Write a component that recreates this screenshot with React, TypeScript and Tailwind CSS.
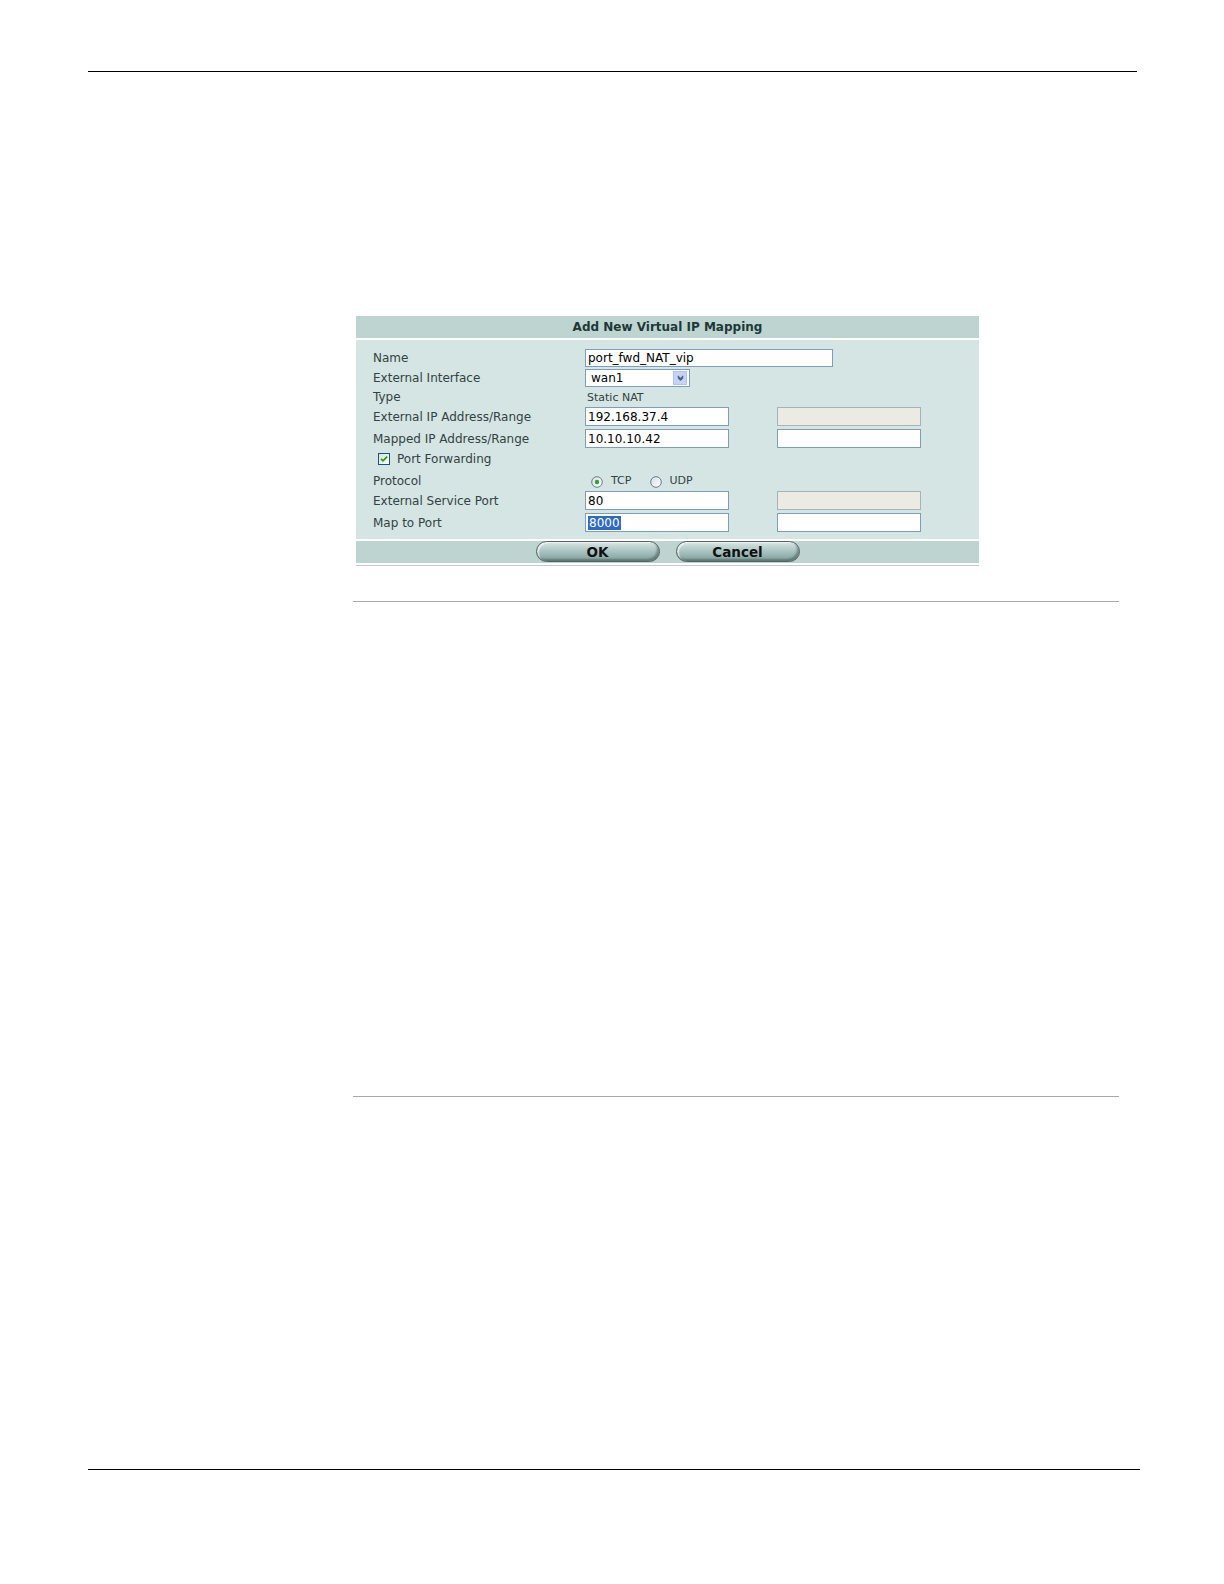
import React from 'react';

const labelCls = "flex items-center text-[12px] leading-none text-[#334242]";

function Field({ w, value, disabled, selected }: { w: string; value?: string; disabled?: boolean; selected?: boolean }) {
  return (
    <div
      className={`${w} h-full flex items-center px-[2px] border text-[12px] leading-none text-black ${
        disabled ? "bg-[#ebebe4] border-[#a9b2b8]" : "bg-white border-[#7f9db9]"
      }`}
    >
      {selected ? (
        <span className="bg-[#316ac5] text-white px-[1px] py-[1px]">{value}</span>
      ) : (
        value
      )}
    </div>
  );
}

function Row({
  label,
  h,
  mt = "",
  main,
  extra,
}: {
  label?: React.ReactNode;
  h: string;
  mt?: string;
  main?: React.ReactNode;
  extra?: React.ReactNode;
}) {
  return (
    <div className={`grid grid-cols-[212px_192px_144px] ${h} ${mt}`}>
      <div className={labelCls}>{label}</div>
      <div className="flex h-full">{main}</div>
      <div className="flex h-full">{extra}</div>
    </div>
  );
}

function Radio({ on }: { on?: boolean }) {
  return (
    <svg width="12" height="12" viewBox="0 0 12 12" className="translate-y-[1px]">
      <defs>
        <linearGradient id={on ? "rg1" : "rg2"} x1="0" y1="0" x2="1" y2="1">
          <stop offset="0" stopColor="#dcdcd7" />
          <stop offset="1" stopColor="#ffffff" />
        </linearGradient>
      </defs>
      <circle cx="6" cy="6" r="5.3" fill={`url(#${on ? "rg1" : "rg2"})`} stroke="#5f7f99" strokeWidth="1" />
      {on && <circle cx="6" cy="6" r="2.2" fill="#2fa52f" />}
    </svg>
  );
}

function Checkbox() {
  return (
    <svg width="12" height="12" viewBox="0 0 12 12">
      <defs>
        <linearGradient id="cbg" x1="0" y1="0" x2="1" y2="1">
          <stop offset="0" stopColor="#dcdcd7" />
          <stop offset="1" stopColor="#ffffff" />
        </linearGradient>
      </defs>
      <rect x="0.5" y="0.5" width="11" height="11" fill="url(#cbg)" stroke="#1c5180" />
      <path d="M3 5.8 L5 7.8 L9.2 3.6" fill="none" stroke="#21a121" strokeWidth="1.8" />
    </svg>
  );
}

function PillButton({ children }: { children: React.ReactNode }) {
  return (
    <div className="w-[124px] h-[21px] rounded-full border border-[#55635f] bg-gradient-to-b from-[#d9e7e5] via-[#a8c2bf] to-[#809f9c] shadow-[inset_-2px_-2px_2px_rgba(40,60,58,0.4),inset_2px_1px_1px_rgba(255,255,255,0.6)] flex items-center justify-center text-[13.5px] font-bold text-[#111] leading-none pt-[3px]">
      {children}
    </div>
  );
}

export default function App() {
  return (
    <div className="w-[1224px] h-[1584px] bg-white flex flex-col font-['DejaVu_Sans',sans-serif]">
      <div className="mt-[71px] ml-[88px] w-[1049px] h-px bg-black" />

      <div className="mt-[244px] ml-[356px] w-[623px] flex flex-col">
        <div className="h-[22px] bg-[#bdd4d1] flex items-center justify-center text-[12px] font-bold text-[#1d3838]">
          Add New Virtual IP Mapping
        </div>
        <div className="h-[2px] bg-white" />
        <div className="bg-[#d4e5e4] pl-[17px] pt-[9px] pb-[7px] flex flex-col">
          <Row h="h-[18px]" label="Name" main={<Field w="w-[248px] shrink-0" value="port_fwd_NAT_vip" />} />
          <Row
            h="h-[18px]"
            mt="mt-[2px]"
            label="External Interface"
            main={
              <div className="w-[105px] h-full border border-[#7f9db9] bg-white flex items-center justify-between pl-[5px] pr-[2px] text-[12px] leading-none text-black">
                wan1
                <div className="w-[14px] h-[14px] bg-[#c4d3f6] border border-[#b0c3ee] flex items-center justify-center">
                  <svg width="7" height="6" viewBox="0 0 7 6">
                    <path d="M0.8 1 L3.5 3.7 L6.2 1 M0.8 2.6 L3.5 5.2 L6.2 2.6" fill="none" stroke="#4d6185" strokeWidth="1.1" />
                  </svg>
                </div>
              </div>
            }
          />
          <Row
            h="h-[20px]"
            label="Type"
            main={<div className="flex items-center pl-[2px] text-[11px] leading-none text-[#334242]">Static NAT</div>}
          />
          <Row
            h="h-[19px]"
            label="External IP Address/Range"
            main={<Field w="w-[144px]" value="192.168.37.4" />}
            extra={<Field w="w-[144px]" disabled />}
          />
          <Row
            h="h-[19px]"
            mt="mt-[3px]"
            label="Mapped IP Address/Range"
            main={<Field w="w-[144px]" value="10.10.10.42" />}
            extra={<Field w="w-[144px]" />}
          />
          <Row
            h="h-[22px]"
            label={
              <span className="flex items-center pl-[5px] gap-[7px]">
                <Checkbox />
                <span className="whitespace-nowrap">Port Forwarding</span>
              </span>
            }
          />
          <Row
            h="h-[21px]"
            label="Protocol"
            main={
              <div className="flex items-center pl-[6px] text-[11px] leading-none text-[#334242]">
                <Radio on />
                <span className="ml-[8px]">TCP</span>
                <span className="ml-[19px] flex">
                  <Radio />
                </span>
                <span className="ml-[7px]">UDP</span>
              </div>
            }
          />
          <Row
            h="h-[19px]"
            label="External Service Port"
            main={<Field w="w-[144px]" value="80" />}
            extra={<Field w="w-[144px]" disabled />}
          />
          <Row
            h="h-[19px]"
            mt="mt-[3px]"
            label="Map to Port"
            main={<Field w="w-[144px]" value="8000" selected />}
            extra={<Field w="w-[144px]" />}
          />
        </div>
        <div className="h-[2px] bg-white" />
        <div className="h-[22px] bg-[#bdd4d1] flex justify-center gap-[16px]">
          <PillButton>OK</PillButton>
          <PillButton>Cancel</PillButton>
        </div>
        <div className="mt-[2px] h-px bg-[#c4c8c8]" />
      </div>

      <div className="mt-[35px] ml-[353px] w-[766px] h-px bg-[#a8a8a8]" />
      <div className="mt-[494px] ml-[353px] w-[766px] h-px bg-[#a8a8a8]" />
      <div className="mt-[372px] ml-[88px] w-[1052px] h-px bg-black" />
    </div>
  );
}
